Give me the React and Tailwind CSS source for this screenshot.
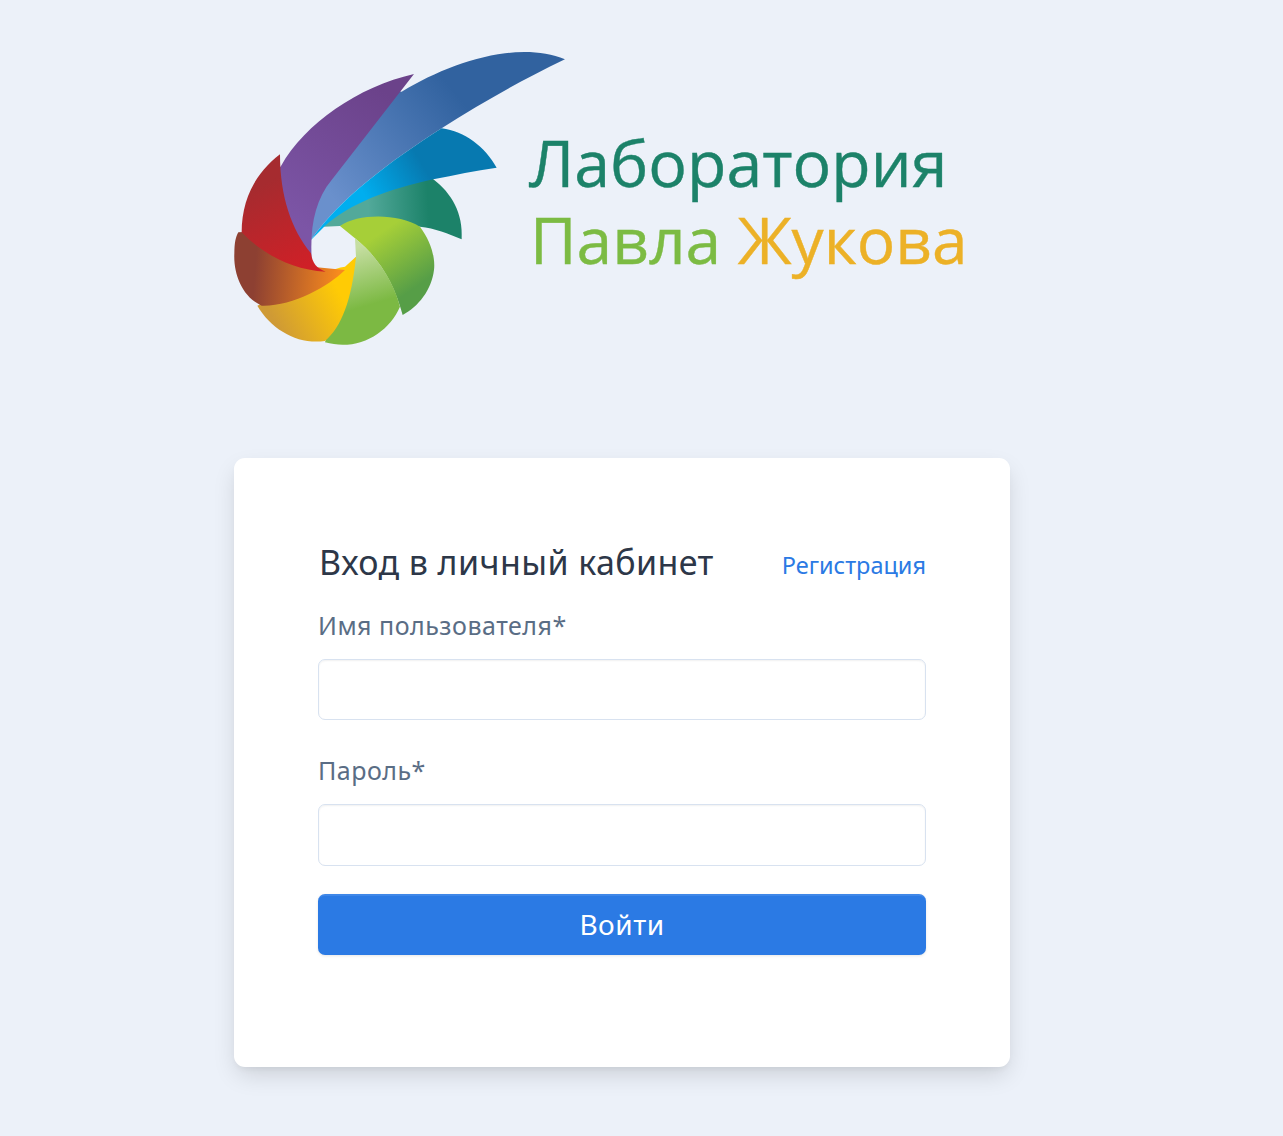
const font = { fontFamily: '"Noto Sans", sans-serif' };

function Logo() {
  return (
    <svg width="755" height="320" viewBox="0 0 755 320" className="block blur-[0.5px]">
      <defs>
        <linearGradient id="g1" gradientUnits="userSpaceOnUse" x1="320" y1="470" x2="700" y2="170">
          <stop offset="0" stopColor="#6a90cc" /><stop offset="1" stopColor="#31629f" />
        </linearGradient>
        <linearGradient id="g2" gradientUnits="userSpaceOnUse" x1="230" y1="560" x2="500" y2="170">
          <stop offset="0" stopColor="#7c55a6" /><stop offset="1" stopColor="#6b428a" />
        </linearGradient>
        <linearGradient id="g3" gradientUnits="userSpaceOnUse" x1="420" y1="470" x2="590" y2="370">
          <stop offset="0" stopColor="#00aeef" /><stop offset="1" stopColor="#0779b0" />
        </linearGradient>
        <linearGradient id="g4" gradientUnits="userSpaceOnUse" x1="430" y1="510" x2="610" y2="500">
          <stop offset="0" stopColor="#52a99a" /><stop offset="1" stopColor="#1c8269" />
        </linearGradient>
        <linearGradient id="g5" gradientUnits="userSpaceOnUse" x1="450" y1="590" x2="560" y2="750">
          <stop offset="0" stopColor="#a6cf38" /><stop offset="1" stopColor="#569e47" />
        </linearGradient>
        <linearGradient id="g6" gradientUnits="userSpaceOnUse" x1="400" y1="620" x2="450" y2="790">
          <stop offset="0" stopColor="#c6dea2" /><stop offset="1" stopColor="#7cb943" />
        </linearGradient>
        <linearGradient id="g7" gradientUnits="userSpaceOnUse" x1="340" y1="750" x2="150" y2="850">
          <stop offset="0" stopColor="#ffcb05" /><stop offset="1" stopColor="#cf9a35" />
        </linearGradient>
        <linearGradient id="g8" gradientUnits="userSpaceOnUse" x1="90" y1="690" x2="340" y2="710">
          <stop offset="0" stopColor="#8d4032" /><stop offset="1" stopColor="#f78a1e" />
        </linearGradient>
        <linearGradient id="g9" gradientUnits="userSpaceOnUse" x1="120" y1="430" x2="240" y2="680">
          <stop offset="0" stopColor="#a62b2f" /><stop offset="1" stopColor="#cf2027" />
        </linearGradient>
      </defs>
      <g transform="scale(0.3333)">
        <path fill="url(#g1)" d="M258 600C240 560 250 480 290 420L500 150L530 155C680 65 880 0 1020 58C880 125 760 195 650 265C500 360 340 480 258 600Z" />
        <path fill="url(#g4)" d="M296 560C370 470 500 400 600 400L625 418C680 460 715 520 710 598C670 580 630 565 585 560C520 545 420 550 345 558Z" />
        <path fill="url(#g3)" d="M258 600C340 480 500 360 650 265C720 275 780 320 815 383C750 392 690 405 625 418C500 445 370 490 296 562Z" />
        <path fill="url(#g2)" d="M567 102C400 140 240 250 168 378L150 400C150 500 200 600 260 655C255 560 270 480 320 420Z" />
        <path fill="url(#g5)" d="M345 558C400 520 520 520 585 560C615 600 632 650 627 690C620 750 580 800 533 825C510 740 470 660 390 595Z" />
        <path fill="url(#g6)" d="M390 595C470 660 510 740 525 800C490 880 400 935 300 907C320 850 340 780 370 680L393 650Z" />
        <path fill="url(#g7)" d="M393 650C380 780 350 860 300 903C220 915 140 870 97 797C180 760 290 690 360 680Z" />
        <path fill="url(#g8)" d="M40 577L56 576C100 590 170 620 260 680L360 690C310 740 200 800 110 797C50 770 25 700 28 640C28 610 32 590 40 577Z" />
        <path fill="url(#g9)" d="M165 343C90 400 50 480 50 577C100 630 190 690 302 695C275 685 262 670 258 640C200 570 165 470 165 343Z" />
      </g>
      <text x="304" y="147" fontSize="64.4" fill="#1c8269" stroke="#1c8269" strokeWidth="0.4" fontFamily="'Open Sans', sans-serif">Лаборатория</text>
      <text x="305" y="224" fontSize="64" strokeWidth="0.4" fontFamily="'Open Sans', sans-serif">
        <tspan fill="#7cbb43" stroke="#7cbb43">Павла </tspan><tspan fill="#ecb127" stroke="#ecb127">Жукова</tspan>
      </text>
    </svg>
  );
}

function Field({ label, className, inputClass }) {
  return (
    <div className={className}>
      <label className="block text-[25px] tracking-[0.5px] leading-[32px] text-[#5a6d85]">{label}</label>
      <input className={"block mt-[18px] w-full rounded-[7px] border border-[#d8e2f0] bg-white shadow-[inset_0_1px_2px_rgba(0,0,0,0.06)] outline-none " + inputClass} />
    </div>
  );
}

export default function App() {
  return (
    <div style={font} className="min-h-screen bg-[#ecf1f9] pl-[225px] pt-[40px] pb-[69px]">
      <Logo />
      <div className="ml-[9px] mt-[98px] w-[776px] h-[609px] rounded-[11px] bg-white shadow-[0_10px_25px_-3px_rgba(0,0,0,0.14),0_4px_6px_-2px_rgba(0,0,0,0.05)] pl-[84px] pr-[84px] pt-[81px]">
        <div className="flex items-start justify-between">
          <h1 className="text-[34px] tracking-[0.4px] leading-[46px] text-[#2d3748] pl-px">Вход в личный кабинет</h1>
          <a className="mt-[8px] text-[23.5px] leading-[36px] text-[#2b7ae4]">Регистрация</a>
        </div>
        <Field label="Имя пользователя*" className="mt-[24px]" inputClass="h-[61px]" />
        <Field label="Пароль*" className="mt-[34px]" inputClass="h-[62px]" />
        <button className="mt-[28px] block w-full h-[61px] pb-[3px] rounded-[7px] bg-[#2b7ae4] border-t-2 border-[#3f87e8] text-white text-[28px] tracking-[0.5px] shadow-[0_1px_3px_rgba(0,0,0,0.1)]">Войти</button>
      </div>
    </div>
  );
}
